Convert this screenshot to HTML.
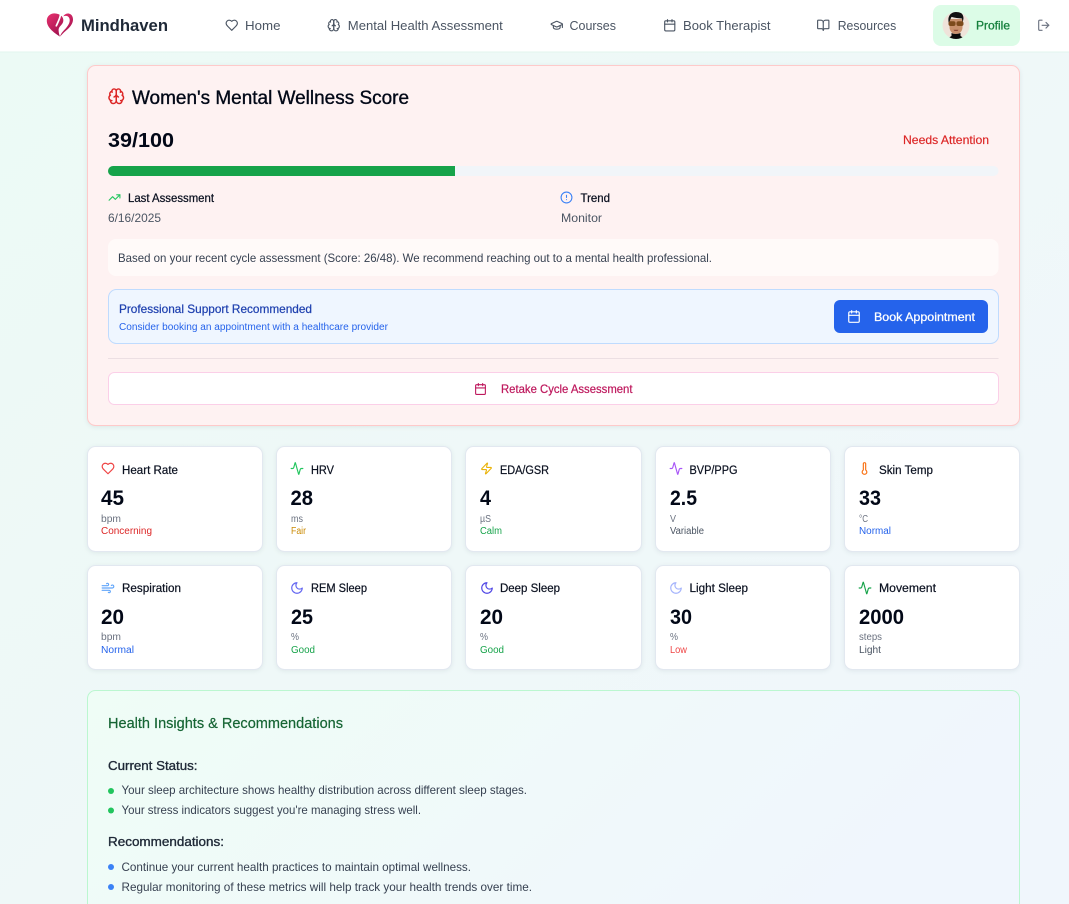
<!DOCTYPE html>
<html lang="en">
<head>
<meta charset="utf-8">
<title>Mindhaven</title>
<style>
html,body{margin:0;padding:0;width:1069px;height:904px;overflow:hidden;background:linear-gradient(135deg,#ecfaf5 0%,#eff8f8 50%,#f0f6fc 100%);}
svg.page{display:block;position:absolute;left:0;top:0;}
text{font-family:"Liberation Sans",Arial,sans-serif;}
.i{fill:none;stroke:currentColor;stroke-width:2;stroke-linecap:round;stroke-linejoin:round;}
.nav{font-size:13px;fill:#4b5563;}
.ct{font-size:12.2px;fill:#0b1120;stroke:#0b1120;stroke-width:.22px;}
.v{font-size:21px;font-weight:700;fill:#020817;}
.u{font-size:10px;fill:#6b7280;}
.s{font-size:10px;}
.card{fill:#fff;stroke:#e2e8f0;stroke-width:1;filter:drop-shadow(0 1px 2px rgba(15,23,42,.07));}
.t12{font-size:12px;}
</style>
</head>
<body>
<svg class="page" xmlns="http://www.w3.org/2000/svg" width="1069" height="904" viewBox="0 0 1069 904">
<defs>
<linearGradient id="ins" x1="0" y1="0" x2="1" y2=".25"><stop offset="0" stop-color="#effdf6"/><stop offset="1" stop-color="#f0f6fd"/></linearGradient>
<linearGradient id="lg" x1="0" y1="0" x2=".6" y2="1"><stop offset="0" stop-color="#e8316f"/><stop offset="1" stop-color="#a3134f"/></linearGradient>
<clipPath id="av"><circle cx="956" cy="25.5" r="13.5"/></clipPath>
<symbol id="heart" viewBox="0 0 24 24"><path class="i" d="M19 14c1.49-1.46 3-3.21 3-5.5A5.5 5.5 0 0 0 16.5 3c-1.76 0-3 .5-4.5 2-1.5-1.5-2.74-2-4.5-2A5.5 5.5 0 0 0 2 8.5c0 2.3 1.5 4.05 3 5.5l7 7Z"/></symbol>
<symbol id="brain" viewBox="0 0 24 24"><g class="i"><path d="M12 5a3 3 0 1 0-5.997.125 4 4 0 0 0-2.526 5.77 4 4 0 0 0 .556 6.588A4 4 0 1 0 12 18Z"/><path d="M12 5a3 3 0 1 1 5.997.125 4 4 0 0 1 2.526 5.77 4 4 0 0 1-.556 6.588A4 4 0 1 1 12 18Z"/><path d="M15 13a4.5 4.5 0 0 1-3-4 4.5 4.5 0 0 1-3 4"/><path d="M17.599 6.5a3 3 0 0 0 .399-1.375"/><path d="M6.003 5.125A3 3 0 0 0 6.401 6.5"/><path d="M3.477 10.896a4 4 0 0 1 .585-.396"/><path d="M19.938 10.5a4 4 0 0 1 .585.396"/><path d="M6 18a4 4 0 0 1-1.967-.516"/><path d="M19.967 17.484A4 4 0 0 1 18 18"/></g></symbol>
<symbol id="cap" viewBox="0 0 24 24"><g class="i"><path d="M21.42 10.922a1 1 0 0 0-.019-1.838L12.83 5.18a2 2 0 0 0-1.66 0L2.6 9.08a1 1 0 0 0 0 1.832l8.57 3.908a2 2 0 0 0 1.66 0z"/><path d="M22 10v6"/><path d="M6 12.5V16a6 3 0 0 0 12 0v-3.5"/></g></symbol>
<symbol id="cal" viewBox="0 0 24 24"><g class="i"><path d="M8 2v4"/><path d="M16 2v4"/><rect x="3" y="4" width="18" height="18" rx="2"/><path d="M3 10h18"/></g></symbol>
<symbol id="book" viewBox="0 0 24 24"><g class="i"><path d="M12 7v14"/><path d="M3 18a1 1 0 0 1-1-1V4a1 1 0 0 1 1-1h5a4 4 0 0 1 4 4 4 4 0 0 1 4-4h5a1 1 0 0 1 1 1v13a1 1 0 0 1-1 1h-6a3 3 0 0 0-3 3 3 3 0 0 0-3-3z"/></g></symbol>
<symbol id="logout" viewBox="0 0 24 24"><g class="i"><path d="M9 21H5a2 2 0 0 1-2-2V5a2 2 0 0 1 2-2h4"/><path d="M16 17l5-5-5-5"/><path d="M21 12H9"/></g></symbol>
<symbol id="trend" viewBox="0 0 24 24"><g class="i"><path d="M22 7l-8.5 8.5-5-5L2 17"/><path d="M16 7h6v6"/></g></symbol>
<symbol id="alert" viewBox="0 0 24 24"><g class="i"><circle cx="12" cy="12" r="10"/><path d="M12 8v4"/><path d="M12 16h.01"/></g></symbol>
<symbol id="act" viewBox="0 0 24 24"><path class="i" d="M22 12h-2.48a2 2 0 0 0-1.93 1.46l-2.35 8.36a.25.25 0 0 1-.48 0L9.24 2.18a.25.25 0 0 0-.48 0l-2.35 8.36A2 2 0 0 1 4.49 12H2"/></symbol>
<symbol id="zap" viewBox="0 0 24 24"><path class="i" d="M4 14a1 1 0 0 1-.78-1.63l9.9-10.2a.5.5 0 0 1 .86.46l-1.92 6.02A1 1 0 0 0 13 10h7a1 1 0 0 1 .78 1.63l-9.9 10.2a.5.5 0 0 1-.86-.46l1.92-6.02A1 1 0 0 0 11 14z"/></symbol>
<symbol id="therm" viewBox="0 0 24 24"><path class="i" d="M14 4v10.54a4 4 0 1 1-4 0V4a2 2 0 0 1 4 0Z"/></symbol>
<symbol id="wind" viewBox="0 0 24 24"><g class="i"><path d="M17.7 7.7a2.5 2.5 0 1 1 1.8 4.3H2"/><path d="M9.6 4.6A2 2 0 1 1 11 8H2"/><path d="M12.6 19.4A2 2 0 1 0 14 16H2"/></g></symbol>
<symbol id="moon" viewBox="0 0 24 24"><path class="i" d="M12 3a6 6 0 0 0 9 9 9 9 0 1 1-9-9Z"/></symbol>
</defs>

<!-- Navigation -->
<rect x="0" y="0" width="1069" height="52" fill="#fff"/>
<rect x="0" y="51.5" width="1069" height="1" fill="#e2f5ee"/>
<!-- Logo: left lobe with a white head-shaped notch, right lobe as a tapering crescent -->
<path fill="url(#lg)" d="M60 36.6C53 32.2 46.8 27.2 46.8 20.8 46.8 16.2 50.4 13.4 54.4 13.4c2.900 0 5.400 1.100 7.300 2.900 1.200 1.200 1.800 2.900 1.600 4.700-.2 2-1.500 3.400-2.700 4.700-1.300 1.400-2.200 2.800-2 4.700.1 2.300 .5 4.300 1.400 6.200z"/>
<path fill="none" stroke="#fff" stroke-width="1.700" stroke-linecap="round" d="M60.300 15.500C59.800 18.800 58 22 56.300 25.800"/>
<path fill="url(#lg)" d="M63.200 16.200c1.700-2.300 4.200-3.100 6.200-2.500 2.300.7 3.600 3 3.600 5.800 0 3.800-2.500 7.100-5.400 9.700-2.500 2.200-5.200 4.500-7.600 7.400.9-3.500 3.800-6.100 5.900-8.400 2.100-2.500 4-5.200 3.800-8.300-.2-2.300-1.500-3.800-3.500-4-1-.1-2 .1-3 .3z"/>
<text x="81" y="31" font-size="17" font-weight="700" fill="#1f2937" textLength="87" lengthAdjust="spacingAndGlyphs">Mindhaven</text>

<use href="#heart" x="225" y="18.500" width="13.500" height="13.500" color="#4b5563"/>
<text class="nav" x="245" y="30" textLength="35.500" lengthAdjust="spacingAndGlyphs">Home</text>
<use href="#brain" x="327" y="18.500" width="13.500" height="13.500" color="#4b5563"/>
<text class="nav" x="347.800" y="30" textLength="155" lengthAdjust="spacingAndGlyphs">Mental Health Assessment</text>
<use href="#cap" x="550" y="18.500" width="13.500" height="13.500" color="#4b5563"/>
<text class="nav" x="569.500" y="30" textLength="46.500" lengthAdjust="spacingAndGlyphs">Courses</text>
<use href="#cal" x="663" y="18.500" width="13.500" height="13.500" color="#4b5563"/>
<text class="nav" x="683" y="30" textLength="87.500" lengthAdjust="spacingAndGlyphs">Book Therapist</text>
<use href="#book" x="816.500" y="18.500" width="13.500" height="13.500" color="#4b5563"/>
<text class="nav" x="837.700" y="30" textLength="58.500" lengthAdjust="spacingAndGlyphs">Resources</text>

<rect x="933" y="5" width="87" height="41" rx="8" fill="#dcfce7"/>
<g clip-path="url(#av)">
<rect x="942" y="12" width="28" height="28" fill="#efe3da"/>
<path fill="#c9906d" d="M949.500 19h13v8c0 4-2.500 7-6.500 7s-6.500-3-6.500-7z"/>
<path fill="#111" d="M948.800 23c-1.300-5 .2-10 6.700-11.200 5.700-.6 8.400 3.200 7.900 7.200l-.7 3.500-.8-4c-3.200-.2-7.400-.6-10.400-1.600l-1.200 2.600z"/>
<rect x="948.500" y="21.300" width="7" height="4.700" rx="2" fill="#7d4a1c"/>
<rect x="956.500" y="21.300" width="7" height="4.700" rx="2" fill="#7d4a1c"/>
<path fill="#8f4a36" d="M953.500 29.800h5l-1 1.200h-3z"/>
<path fill="#0a0a0a" d="M951.500 33c2.500 1.300 6 1.300 9 0v3l4 2.500v2h-17v-2l4-2.500z"/>
</g>
<text x="976" y="29.500" font-size="12" fill="#15803d" stroke="#15803d" stroke-width=".3" textLength="34" lengthAdjust="spacingAndGlyphs">Profile</text>
<use href="#logout" x="1037" y="18.500" width="13.500" height="13.500" color="#6b7280"/>

<!-- Wellness score -->
<rect x="87.500" y="65.500" width="932" height="360" rx="8" fill="#fef2f2" stroke="#fecaca" style="filter:drop-shadow(0 1px 2px rgba(15,23,42,.08))"/>
<use href="#brain" x="107.500" y="87.500" width="17.500" height="17.500" color="#dc2626"/>
<text x="132" y="104" font-size="19" fill="#020817" stroke="#020817" stroke-width=".35" textLength="277" lengthAdjust="spacingAndGlyphs">Women's Mental Wellness Score</text>
<text x="108" y="147" font-size="20.500" font-weight="700" fill="#020817" textLength="66" lengthAdjust="spacingAndGlyphs">39/100</text>
<text x="903" y="144" font-size="12" fill="#dc2626" stroke="#dc2626" stroke-width=".18" textLength="86" lengthAdjust="spacingAndGlyphs">Needs Attention</text>
<rect x="108" y="166" width="890.500" height="10" rx="5" fill="#f1f5f9"/>
<path d="M113 166H455V176H113a5 5 0 0 1 0-10z" fill="#16a34a"/>

<use href="#trend" x="108" y="191" width="13" height="13" color="#22c55e"/>
<text class="t12" x="128" y="202" fill="#0b1120" stroke="#0b1120" stroke-width=".25" textLength="86" lengthAdjust="spacingAndGlyphs">Last Assessment</text>
<text class="t12" x="108" y="222" fill="#4b5563" textLength="53" lengthAdjust="spacingAndGlyphs">6/16/2025</text>
<use href="#alert" x="560" y="191" width="13" height="13" color="#3b82f6"/>
<text class="t12" x="580.500" y="202" fill="#0b1120" stroke="#0b1120" stroke-width=".25" textLength="29.500" lengthAdjust="spacingAndGlyphs">Trend</text>
<text class="t12" x="561" y="222" fill="#4b5563" textLength="41" lengthAdjust="spacingAndGlyphs">Monitor</text>

<rect x="108" y="239" width="890.500" height="37" rx="8" fill="#fffaf9"/>
<text class="t12" x="118" y="262" fill="#374151" textLength="594" lengthAdjust="spacingAndGlyphs">Based on your recent cycle assessment (Score: 26/48). We recommend reaching out to a mental health professional.</text>

<rect x="108.500" y="289.500" width="890" height="54" rx="8" fill="#eff6ff" stroke="#bfdbfe"/>
<text class="t12" x="119" y="313" fill="#1e40af" stroke="#1e40af" stroke-width=".22" textLength="193" lengthAdjust="spacingAndGlyphs">Professional Support Recommended</text>
<text x="119" y="330" font-size="10" fill="#2563eb" textLength="269" lengthAdjust="spacingAndGlyphs">Consider booking an appointment with a healthcare provider</text>
<rect x="834" y="300" width="154" height="33" rx="6" fill="#2563eb"/>
<use href="#cal" x="847" y="309.500" width="14" height="14" color="#fff"/>
<text class="t12" x="874" y="321" fill="#fff" stroke="#fff" stroke-width=".25" textLength="101" lengthAdjust="spacingAndGlyphs">Book Appointment</text>

<rect x="108" y="358" width="890.500" height="1" fill="#ecdfe3"/>
<rect x="108.500" y="372.500" width="890" height="32" rx="6" fill="#fff" stroke="#fbcfe8"/>
<use href="#cal" x="474" y="382.500" width="13" height="13" color="#be185d"/>
<text class="t12" x="501" y="393" fill="#be185d" stroke="#be185d" stroke-width=".22" textLength="131.500" lengthAdjust="spacingAndGlyphs">Retake Cycle Assessment</text>

<!-- Metric cards row 1 -->
<rect class="card" x="87.500" y="446.500" width="175" height="105" rx="8"/>
<rect class="card" x="276.500" y="446.500" width="175" height="105" rx="8"/>
<rect class="card" x="465.500" y="446.500" width="176" height="105" rx="8"/>
<rect class="card" x="655.500" y="446.500" width="175" height="105" rx="8"/>
<rect class="card" x="844.500" y="446.500" width="175" height="105" rx="8"/>
<!-- Metric cards row 2 -->
<rect class="card" x="87.500" y="565.500" width="175" height="104" rx="8"/>
<rect class="card" x="276.500" y="565.500" width="175" height="104" rx="8"/>
<rect class="card" x="465.500" y="565.500" width="176" height="104" rx="8"/>
<rect class="card" x="655.500" y="565.500" width="175" height="104" rx="8"/>
<rect class="card" x="844.500" y="565.500" width="175" height="104" rx="8"/>

<use href="#heart" x="101" y="461.500" width="14" height="14" color="#ef4444"/>
<text class="ct" x="122" y="474" textLength="56" lengthAdjust="spacingAndGlyphs">Heart Rate</text>
<text class="v" x="101" y="505" textLength="23" lengthAdjust="spacingAndGlyphs">45</text>
<text class="u" x="101" y="522" textLength="20" lengthAdjust="spacingAndGlyphs">bpm</text>
<text class="s" x="101" y="534" fill="#dc2626" textLength="51" lengthAdjust="spacingAndGlyphs">Concerning</text>

<use href="#act" x="290" y="461.500" width="14" height="14" color="#22c55e"/>
<text class="ct" x="311" y="474" textLength="23" lengthAdjust="spacingAndGlyphs">HRV</text>
<text class="v" x="290.500" y="505" textLength="22.500" lengthAdjust="spacingAndGlyphs">28</text>
<text class="u" x="291" y="522" textLength="12" lengthAdjust="spacingAndGlyphs">ms</text>
<text class="s" x="291" y="534" fill="#ca8a04" textLength="15" lengthAdjust="spacingAndGlyphs">Fair</text>

<use href="#zap" x="480" y="462" width="13" height="13" color="#eab308"/>
<text class="ct" x="500" y="474" textLength="49" lengthAdjust="spacingAndGlyphs">EDA/GSR</text>
<text class="v" x="480" y="505" textLength="11" lengthAdjust="spacingAndGlyphs">4</text>
<text class="u" x="480" y="522" textLength="11" lengthAdjust="spacingAndGlyphs">µS</text>
<text class="s" x="480" y="534" fill="#16a34a" textLength="22" lengthAdjust="spacingAndGlyphs">Calm</text>

<use href="#act" x="669" y="461.500" width="14" height="14" color="#a855f7"/>
<text class="ct" x="689.500" y="474" textLength="48" lengthAdjust="spacingAndGlyphs">BVP/PPG</text>
<text class="v" x="670" y="505" textLength="27" lengthAdjust="spacingAndGlyphs">2.5</text>
<text class="u" x="670" y="522" textLength="6" lengthAdjust="spacingAndGlyphs">V</text>
<text class="s" x="670" y="534" fill="#4b5563" textLength="34" lengthAdjust="spacingAndGlyphs">Variable</text>

<use href="#therm" x="857.500" y="461.500" width="14" height="14" color="#f97316"/>
<text class="ct" x="879" y="474" textLength="54" lengthAdjust="spacingAndGlyphs">Skin Temp</text>
<text class="v" x="859" y="505" textLength="22" lengthAdjust="spacingAndGlyphs">33</text>
<text class="u" x="859" y="522" textLength="9" lengthAdjust="spacingAndGlyphs">°C</text>
<text class="s" x="859" y="534" fill="#2563eb" textLength="32" lengthAdjust="spacingAndGlyphs">Normal</text>

<use href="#wind" x="101" y="581" width="14" height="14" color="#60a5fa"/>
<text class="ct" x="122" y="592" textLength="59" lengthAdjust="spacingAndGlyphs">Respiration</text>
<text class="v" x="101" y="624" textLength="23" lengthAdjust="spacingAndGlyphs">20</text>
<text class="u" x="101" y="640" textLength="20" lengthAdjust="spacingAndGlyphs">bpm</text>
<text class="s" x="101" y="653" fill="#2563eb" textLength="33" lengthAdjust="spacingAndGlyphs">Normal</text>

<use href="#moon" x="290" y="581" width="14" height="14" color="#6366f1"/>
<text class="ct" x="311" y="592" textLength="56" lengthAdjust="spacingAndGlyphs">REM Sleep</text>
<text class="v" x="291" y="624" textLength="22" lengthAdjust="spacingAndGlyphs">25</text>
<text class="u" x="291" y="640" textLength="8" lengthAdjust="spacingAndGlyphs">%</text>
<text class="s" x="291" y="653" fill="#16a34a" textLength="24" lengthAdjust="spacingAndGlyphs">Good</text>

<use href="#moon" x="480" y="581" width="14" height="14" color="#4f46e5"/>
<text class="ct" x="500" y="592" textLength="60" lengthAdjust="spacingAndGlyphs">Deep Sleep</text>
<text class="v" x="480" y="624" textLength="23" lengthAdjust="spacingAndGlyphs">20</text>
<text class="u" x="480" y="640" textLength="8" lengthAdjust="spacingAndGlyphs">%</text>
<text class="s" x="480" y="653" fill="#16a34a" textLength="24" lengthAdjust="spacingAndGlyphs">Good</text>

<use href="#moon" x="669" y="581" width="14" height="14" color="#a5b4fc"/>
<text class="ct" x="689.500" y="592" textLength="58.500" lengthAdjust="spacingAndGlyphs">Light Sleep</text>
<text class="v" x="670" y="624" textLength="22" lengthAdjust="spacingAndGlyphs">30</text>
<text class="u" x="670" y="640" textLength="8" lengthAdjust="spacingAndGlyphs">%</text>
<text class="s" x="670" y="653" fill="#ef4444" textLength="17" lengthAdjust="spacingAndGlyphs">Low</text>

<use href="#act" x="858" y="581" width="14" height="14" color="#16a34a"/>
<text class="ct" x="879" y="592" textLength="57" lengthAdjust="spacingAndGlyphs">Movement</text>
<text class="v" x="859" y="624" textLength="45" lengthAdjust="spacingAndGlyphs">2000</text>
<text class="u" x="859" y="640" textLength="23" lengthAdjust="spacingAndGlyphs">steps</text>
<text class="s" x="859" y="653" fill="#4b5563" textLength="22" lengthAdjust="spacingAndGlyphs">Light</text>

<!-- Insights -->
<path d="M87.500 904V698.500a8 8 0 0 1 8-8H1011.500a8 8 0 0 1 8 8V904" fill="url(#ins)" stroke="#bbf7d0"/>
<text x="108" y="728" font-size="14.500" fill="#166534" stroke="#166534" stroke-width=".2" textLength="235" lengthAdjust="spacingAndGlyphs">Health Insights &amp; Recommendations</text>
<text x="108" y="770" font-size="13" fill="#1f2937" stroke="#1f2937" stroke-width=".35" textLength="89.500" lengthAdjust="spacingAndGlyphs">Current Status:</text>
<circle cx="111" cy="791" r="3" fill="#22c55e"/>
<text class="t12" x="121.500" y="794" fill="#374151" textLength="405.500" lengthAdjust="spacingAndGlyphs">Your sleep architecture shows healthy distribution across different sleep stages.</text>
<circle cx="111" cy="810.500" r="3" fill="#22c55e"/>
<text class="t12" x="121.500" y="814" fill="#374151" textLength="299.500" lengthAdjust="spacingAndGlyphs">Your stress indicators suggest you're managing stress well.</text>
<text x="108" y="846" font-size="13" fill="#1f2937" stroke="#1f2937" stroke-width=".35" textLength="116" lengthAdjust="spacingAndGlyphs">Recommendations:</text>
<circle cx="111" cy="867" r="3" fill="#3b82f6"/>
<text class="t12" x="121.500" y="871" fill="#374151" textLength="349.500" lengthAdjust="spacingAndGlyphs">Continue your current health practices to maintain optimal wellness.</text>
<circle cx="111" cy="887" r="3" fill="#3b82f6"/>
<text class="t12" x="121.500" y="891" fill="#374151" textLength="410.500" lengthAdjust="spacingAndGlyphs">Regular monitoring of these metrics will help track your health trends over time.</text>
</svg>
</body>
</html>
